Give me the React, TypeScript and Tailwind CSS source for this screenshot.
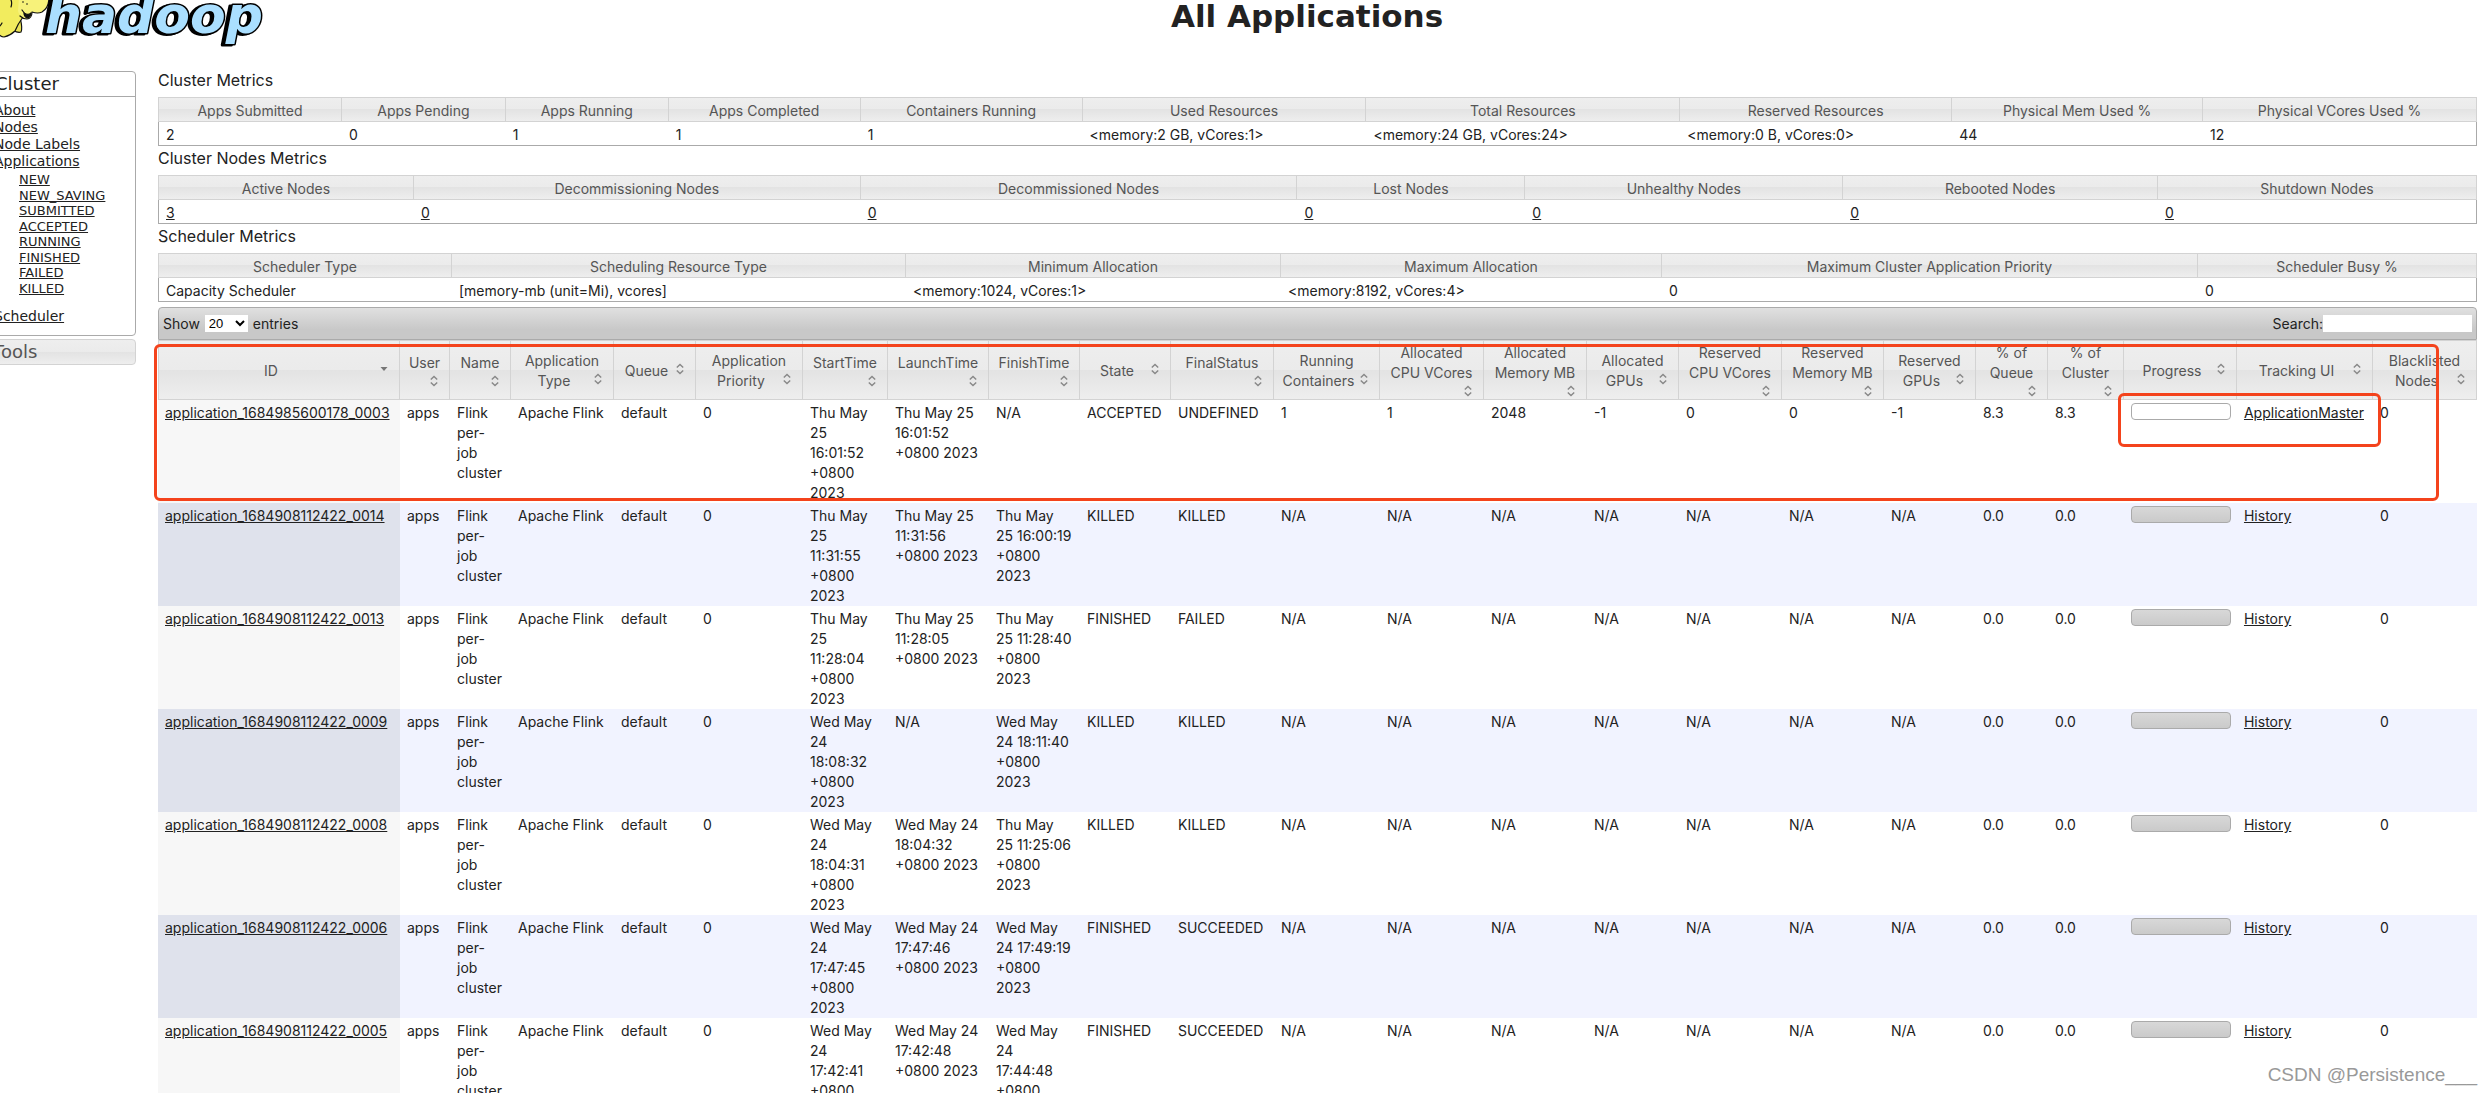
import type { ReactNode } from "react";

type Column = { label: string; width: number };

const HEAD_BG =
  "bg-[linear-gradient(to_bottom,#eeeeee_0%,#ebebeb_50%,#e3e3e3_50%,#eeeeee_100%)]";

function Cols({ columns }: { columns: Column[] }) {
  const total = columns.reduce((sum, c) => sum + c.width, 0);
  return (
    <colgroup>
      {columns.map((c) => (
        <col key={c.label} style={{ width: `${(c.width / total) * 100}%` }} />
      ))}
    </colgroup>
  );
}

function Link({ children }: { children: ReactNode }) {
  return (
    <a href="#" className="underline">
      {children}
    </a>
  );
}

function Metrics({
  title,
  columns,
  values,
  linked = false,
}: {
  title: string;
  columns: Column[];
  values: string[];
  linked?: boolean;
}) {
  return (
    <section>
      <h2 className="mb-[5px] text-base leading-6">{title}</h2>
      <table className="h-12 w-full table-fixed border-separate border-spacing-0 text-sm leading-5">
        <Cols columns={columns} />
        <thead>
          <tr>
            {columns.map((c) => (
              <th
                key={c.label}
                className={`${HEAD_BG} h-[25px] border-y border-r border-[#d3d3d3] px-1.5 pt-[3px] font-normal whitespace-nowrap text-[#555] first:border-l`}
              >
                {c.label}
              </th>
            ))}
          </tr>
        </thead>
        <tbody>
          <tr>
            {values.map((v, i) => (
              <td
                key={columns[i].label}
                className="h-6 border-b border-[#aaa] px-[7px] pt-0.5 whitespace-nowrap first:border-l last:border-r"
              >
                {linked ? <Link>{v}</Link> : v}
              </td>
            ))}
          </tr>
        </tbody>
      </table>
    </section>
  );
}

const clusterColumns: Column[] = [
  { label: "Apps Submitted", width: 184 },
  { label: "Apps Pending", width: 164 },
  { label: "Apps Running", width: 163 },
  { label: "Apps Completed", width: 192 },
  { label: "Containers Running", width: 222 },
  { label: "Used Resources", width: 284 },
  { label: "Total Resources", width: 314 },
  { label: "Reserved Resources", width: 272 },
  { label: "Physical Mem Used %", width: 251 },
  { label: "Physical VCores Used %", width: 274 },
];

const nodeColumns: Column[] = [
  { label: "Active Nodes", width: 256 },
  { label: "Decommissioning Nodes", width: 447 },
  { label: "Decommissioned Nodes", width: 437 },
  { label: "Lost Nodes", width: 228 },
  { label: "Unhealthy Nodes", width: 318 },
  { label: "Rebooted Nodes", width: 315 },
  { label: "Shutdown Nodes", width: 319 },
];

const schedulerColumns: Column[] = [
  { label: "Scheduler Type", width: 294 },
  { label: "Scheduling Resource Type", width: 454 },
  { label: "Minimum Allocation", width: 375 },
  { label: "Maximum Allocation", width: 381 },
  { label: "Maximum Cluster Application Priority", width: 536 },
  { label: "Scheduler Busy %", width: 279 },
];

const appColumns: Column[] = [
  { label: "ID", width: 242 },
  { label: "User", width: 50 },
  { label: "Name", width: 61 },
  { label: "Application Type", width: 103 },
  { label: "Queue", width: 82 },
  { label: "Application Priority", width: 107 },
  { label: "StartTime", width: 85 },
  { label: "LaunchTime", width: 101 },
  { label: "FinishTime", width: 91 },
  { label: "State", width: 91 },
  { label: "FinalStatus", width: 103 },
  { label: "Running Containers", width: 106 },
  { label: "Allocated CPU VCores", width: 104 },
  { label: "Allocated Memory MB", width: 103 },
  { label: "Allocated GPUs", width: 92 },
  { label: "Reserved CPU VCores", width: 103 },
  { label: "Reserved Memory MB", width: 102 },
  { label: "Reserved GPUs", width: 92 },
  { label: "% of Queue", width: 72 },
  { label: "% of Cluster", width: 76 },
  { label: "Progress", width: 113 },
  { label: "Tracking UI", width: 136 },
  { label: "Blacklisted Nodes", width: 104 },
];

type App = {
  id: string;
  start: string;
  launch: string;
  finish: string;
  state: string;
  final: string;
  live?: boolean;
};

const apps: App[] = [
  {
    id: "application_1684985600178_0003",
    start: "Thu May\n25\n16:01:52\n+0800\n2023",
    launch: "Thu May 25\n16:01:52\n+0800 2023",
    finish: "N/A",
    state: "ACCEPTED",
    final: "UNDEFINED",
    live: true,
  },
  {
    id: "application_1684908112422_0014",
    start: "Thu May\n25\n11:31:55\n+0800\n2023",
    launch: "Thu May 25\n11:31:56\n+0800 2023",
    finish: "Thu May\n25 16:00:19\n+0800\n2023",
    state: "KILLED",
    final: "KILLED",
  },
  {
    id: "application_1684908112422_0013",
    start: "Thu May\n25\n11:28:04\n+0800\n2023",
    launch: "Thu May 25\n11:28:05\n+0800 2023",
    finish: "Thu May\n25 11:28:40\n+0800\n2023",
    state: "FINISHED",
    final: "FAILED",
  },
  {
    id: "application_1684908112422_0009",
    start: "Wed May\n24\n18:08:32\n+0800\n2023",
    launch: "N/A",
    finish: "Wed May\n24 18:11:40\n+0800\n2023",
    state: "KILLED",
    final: "KILLED",
  },
  {
    id: "application_1684908112422_0008",
    start: "Wed May\n24\n18:04:31\n+0800\n2023",
    launch: "Wed May 24\n18:04:32\n+0800 2023",
    finish: "Thu May\n25 11:25:06\n+0800\n2023",
    state: "KILLED",
    final: "KILLED",
  },
  {
    id: "application_1684908112422_0006",
    start: "Wed May\n24\n17:47:45\n+0800\n2023",
    launch: "Wed May 24\n17:47:46\n+0800 2023",
    finish: "Wed May\n24 17:49:19\n+0800\n2023",
    state: "FINISHED",
    final: "SUCCEEDED",
  },
  {
    id: "application_1684908112422_0005",
    start: "Wed May\n24\n17:42:41\n+0800\n2023",
    launch: "Wed May 24\n17:42:48\n+0800 2023",
    finish: "Wed May\n24\n17:44:48\n+0800\n2023",
    state: "FINISHED",
    final: "SUCCEEDED",
  },
];

function SortIcon({ active }: { active: boolean }) {
  return (
    <svg viewBox="0 0 16 16" className="float-right size-4" aria-hidden="true">
      {active ? (
        <path d="M4.5 6h7L8 10z" fill="#777" />
      ) : (
        <path
          d="M4.8 6.6 8 3.4l3.2 3.2M4.8 9.4 8 12.6l3.2-3.2"
          fill="none"
          stroke="#888"
          strokeWidth="1.4"
        />
      )}
    </svg>
  );
}

function cells(app: App): ReactNode[] {
  const na = (v: string) => (app.live ? v : "N/A");
  const share = app.live ? "8.3" : "0.0";
  return [
    <Link>{app.id}</Link>,
    "apps",
    "Flink\nper-\njob\ncluster",
    "Apache Flink",
    "default",
    "0",
    app.start,
    app.launch,
    app.finish,
    app.state,
    app.final,
    na("1"),
    na("1"),
    na("2048"),
    na("-1"),
    na("0"),
    na("0"),
    na("-1"),
    share,
    share,
    <div
      role="progressbar"
      aria-label={`Progress of ${app.id}`}
      aria-valuenow={app.live ? 0 : 100}
      className={`h-[17px] w-[100px] rounded border border-[#aaa] ${
        app.live ? "bg-white" : "bg-linear-to-b from-[#d8d8d8] to-[#cacaca]"
      }`}
    />,
    <Link>{app.live ? "ApplicationMaster" : "History"}</Link>,
    "0",
  ];
}

function Logo() {
  return (
    <svg viewBox="0 0 270 55" className="h-[55px] w-[270px] shrink-0" role="img" aria-label="Hadoop logo">
      <g stroke="#111" strokeWidth="1.2" strokeLinejoin="round" strokeLinecap="round">
        <path d="M20 17c-3 4-5 9-7 13 3 2 6 3 8 2 2-4 0-10-1-15z" fill="#e9e255" />
        <path d="M-3-3h26v20c-3 4-6 9-8 14-3 3-7 5-11 6-3 0-5-2-7-5z" fill="#f2ec5e" />
        <path d="M19-3h30c0 7-2 12-7 15-4 2-7 1-10 0 0 4-2 7-5 7-5-1-8-4-9-8z" fill="#f7f27a" stroke="none" />
        <path d="M49-3c0 7-2 12-7 15-4 2-7 1-10 0 0 4-2 7-5 7-3 0-5-1-7-3" fill="none" />
        <path d="M-2 27c2 0 3-2 4-4M10-2c2 3 2 6 1 9M22 10l3 4" fill="none" />
        <path d="M24 13c3 2 5 2 7 0 0 3-2 5-4 5-2-1-3-3-3-5z" fill="#111" />
      </g>
      <circle cx="23" cy="2" r="0.8" fill="#111" />
      <circle cx="27" cy="4" r="0.8" fill="#111" />
      <text
        x="45"
        y="33"
        stroke="#000"
        strokeWidth="3"
        strokeLinejoin="round"
        fill="#aadfff"
        className="font-['DejaVu_Sans',sans-serif] text-[52px] font-bold italic drop-shadow-[-3px_1px_0_#000] [paint-order:stroke]"
      >
        hadoop
      </text>
    </svg>
  );
}

const states = ["NEW", "NEW_SAVING", "SUBMITTED", "ACCEPTED", "RUNNING", "FINISHED", "FAILED", "KILLED"];

function Sidebar() {
  return (
    <nav className="-ml-2 flex w-36 shrink-0 flex-col gap-[3px] pt-[3px] font-['DejaVu_Sans',sans-serif] text-sm">
      <section className="rounded-r border border-[#aaa]">
        <h2 className="h-[25px] border-b border-[#aaa] pl-0.5 text-lg leading-6">Cluster</h2>
        <ul className="px-px pt-[5px] pb-2.5 leading-[17px]">
          <li><Link>About</Link></li>
          <li><Link>Nodes</Link></li>
          <li><Link>Node Labels</Link></li>
          <li>
            <Link>Applications</Link>
            <ul className="mt-0.5 mb-3 flex h-[124px] flex-col pl-[25px] text-[13px] leading-[15px]">
              {states.map((s) => (
                <li key={s} className="flex flex-1 items-center"><Link>{s}</Link></li>
              ))}
            </ul>
          </li>
          <li><Link>Scheduler</Link></li>
        </ul>
      </section>
      <h2 className={`${HEAD_BG} h-[26px] rounded-r border border-[#d3d3d3] text-lg leading-6 text-[#555]`}>
        Tools
      </h2>
    </nav>
  );
}

export default function App() {
  return (
    <div className="relative h-screen overflow-hidden bg-white font-[Inter,sans-serif] text-[#222]">
      <header className="flex h-[68px] items-start">
        <Logo />
        <h1 className="-ml-[147px] flex-1 text-center font-['DejaVu_Sans',sans-serif] text-[31px] leading-8 font-bold">
          All Applications
        </h1>
      </header>

      <div className="flex items-start">
        <Sidebar />
        <main className="mr-3.5 ml-[22px] min-w-0 flex-1">
          <Metrics
            title="Cluster Metrics"
            columns={clusterColumns}
            values={["2", "0", "1", "1", "1", "<memory:2 GB, vCores:1>", "<memory:24 GB, vCores:24>", "<memory:0 B, vCores:0>", "44", "12"]}
          />
          <Metrics
            title="Cluster Nodes Metrics"
            columns={nodeColumns}
            values={["3", "0", "0", "0", "0", "0", "0"]}
            linked
          />
          <Metrics
            title="Scheduler Metrics"
            columns={schedulerColumns}
            values={["Capacity Scheduler", "[memory-mb (unit=Mi), vcores]", "<memory:1024, vCores:1>", "<memory:8192, vCores:4>", "0", "0"]}
          />

          <section className="relative mt-[5px] text-sm leading-5">
            <div className="flex h-[33px] items-center justify-between rounded-t border border-[#aaa] bg-linear-to-b from-[#e0e0e0] to-[#c8c8c8] to-70% pr-1 pl-1">
              <label className="flex items-center gap-[5px]">
                Show
                <select
                  defaultValue="20"
                  className="h-[17px] w-[43px] bg-white font-['Liberation_Sans',sans-serif] text-[13px] text-black"
                >
                  <option>20</option>
                  <option>40</option>
                  <option>60</option>
                  <option>80</option>
                  <option>100</option>
                </select>
                entries
              </label>
              <label className="flex items-center">
                Search:
                <input type="text" className="h-[17px] w-[149px] bg-white px-1" />
              </label>
            </div>

            <table className="w-full table-fixed border-separate border-spacing-0">
              <Cols columns={appColumns} />
              <thead>
                <tr>
                  {appColumns.map((c, i) => (
                    <th
                      key={c.label}
                      className={`${HEAD_BG} h-[60px] border-y border-r border-[#d3d3d3] px-[7px] pt-0.5 font-normal text-[#555] first:border-l`}
                    >
                      <button type="button" className="block w-full text-center">
                        {c.label}
                        <SortIcon active={i === 0} />
                      </button>
                    </th>
                  ))}
                </tr>
              </thead>
              <tbody>
                {apps.map((app, row) => (
                  <tr key={app.id} className={row % 2 ? "bg-[#f1f3ff]" : "bg-white"}>
                    {cells(app).map((cell, i) => (
                      <td
                        key={appColumns[i].label}
                        className={`h-[103px] px-[7px] pt-[3px] align-top whitespace-pre ${
                          i === 0 ? (row % 2 ? "bg-[#dfe2ec]" : "bg-[#f7f7f7]") : ""
                        }`}
                      >
                        {cell}
                      </td>
                    ))}
                  </tr>
                ))}
              </tbody>
            </table>

            <div className="pointer-events-none absolute top-[37px] right-[38px] -left-1 h-[157px] rounded-md border-3 border-[#f4431c]" />
            <div className="pointer-events-none absolute top-[86px] right-24 h-[54px] w-[263px] rounded-md border-3 border-[#f4431c]" />
          </section>
        </main>
      </div>

      <p className="absolute right-3.5 bottom-1.5 font-['Liberation_Sans',sans-serif] text-[19px] leading-6 text-[#999]">
        CSDN @Persistence___
      </p>
    </div>
  );
}
